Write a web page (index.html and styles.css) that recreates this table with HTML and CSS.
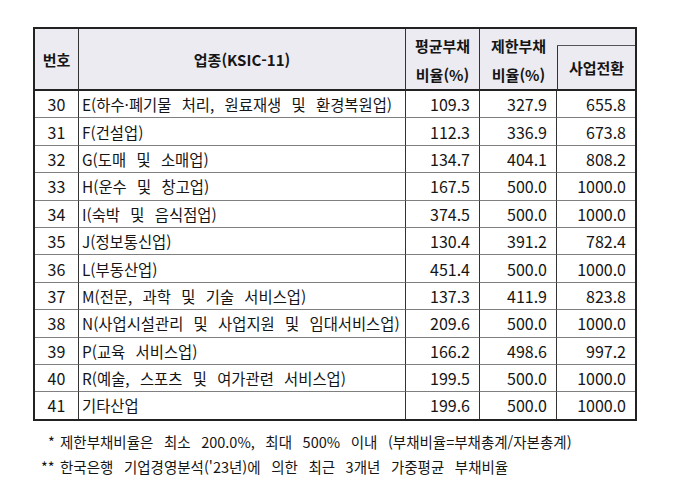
FILE: index.html
```html
<!DOCTYPE html>
<html lang="ko">
<head>
<meta charset="utf-8">
<link rel="stylesheet" href="styles.css">
</head>
<body>
<div class="page">
  <table class="debt">
    <colgroup>
      <col class="c-no"><col class="c-name"><col class="c-avg"><col class="c-lim"><col class="c-conv">
    </colgroup>
    <thead>
      <tr class="h1">
        <th rowspan="2" class="b-r">번호</th>
        <th rowspan="2" class="b-r">업종(KSIC-11)</th>
        <th rowspan="2" class="b-r two">평균부채<br>비율(%)</th>
        <th rowspan="2" class="two lim">제한부채<br>비율(%)</th>
        <th class="blank"></th>
      </tr>
      <tr class="h2">
        <th class="conv">사업전환</th>
      </tr>
    </thead>
    <tbody>
      <tr><td class="no">30</td><td class="name">E(하수·폐기물 처리, 원료재생 및 환경복원업)</td><td class="num">109.3</td><td class="num">327.9</td><td class="num last">655.8</td></tr>
      <tr><td class="no">31</td><td class="name">F(건설업)</td><td class="num">112.3</td><td class="num">336.9</td><td class="num last">673.8</td></tr>
      <tr><td class="no">32</td><td class="name">G(도매 및 소매업)</td><td class="num">134.7</td><td class="num">404.1</td><td class="num last">808.2</td></tr>
      <tr><td class="no">33</td><td class="name">H(운수 및 창고업)</td><td class="num">167.5</td><td class="num">500.0</td><td class="num last">1000.0</td></tr>
      <tr><td class="no">34</td><td class="name">I(숙박 및 음식점업)</td><td class="num">374.5</td><td class="num">500.0</td><td class="num last">1000.0</td></tr>
      <tr><td class="no">35</td><td class="name">J(정보통신업)</td><td class="num">130.4</td><td class="num">391.2</td><td class="num last">782.4</td></tr>
      <tr><td class="no">36</td><td class="name">L(부동산업)</td><td class="num">451.4</td><td class="num">500.0</td><td class="num last">1000.0</td></tr>
      <tr><td class="no">37</td><td class="name">M(전문, 과학 및 기술 서비스업)</td><td class="num">137.3</td><td class="num">411.9</td><td class="num last">823.8</td></tr>
      <tr><td class="no">38</td><td class="name">N(사업시설관리 및 사업지원 및 임대서비스업)</td><td class="num">209.6</td><td class="num">500.0</td><td class="num last">1000.0</td></tr>
      <tr><td class="no">39</td><td class="name">P(교육 서비스업)</td><td class="num">166.2</td><td class="num">498.6</td><td class="num last">997.2</td></tr>
      <tr><td class="no">40</td><td class="name">R(예술, 스포츠 및 여가관련 서비스업)</td><td class="num">199.5</td><td class="num">500.0</td><td class="num last">1000.0</td></tr>
      <tr class="end"><td class="no">41</td><td class="name">기타산업</td><td class="num">199.6</td><td class="num">500.0</td><td class="num last">1000.0</td></tr>
    </tbody>
  </table>
  <div class="notes">
    <p class="note"><span class="mark m1">*</span><span>제한부채비율은 최소 200.0%, 최대 500% 이내 (부채비율=부채총계/자본총계)</span></p>
    <p class="note"><span class="mark m2">**</span><span>한국은행 기업경영분석('23년)에 의한 최근 3개년 가중평균 부채비율</span></p>
  </div>
</div>
</body>
</html>
```

FILE: styles.css
```css
html, body {
  margin: 0;
  padding: 0;
  background: #ffffff;
}

body {
  font-family: "Noto Sans CJK KR", "Noto Sans", sans-serif;
  color: #151515;
}

.page {
  padding: 27px 0 0 33px;
}

.debt {
  border-collapse: separate;
  border-spacing: 0;
  border: 2px solid #222;
  width: 602px;
  table-layout: fixed;
  font-size: 16px;
}

.c-no { width: 44px; }
.c-name { width: 327px; }
.c-avg { width: 74px; }
.c-lim { width: 77px; }
.c-conv { width: 78px; }

thead th {
  background: #ecebf1;
  font-weight: 700;
  font-size: 15px;
  padding: 0;
  border-bottom: 2px solid #222;
  line-height: 29px;
  text-align: center;
}

.h1 { height: 16px; }
.h2 { height: 45px; }

th.b-r { border-right: 1px solid #333; }
th.two { line-height: 29px; padding-top: 2px; }

th.blank {
  border-bottom: 1px solid #555;
  height: 16px;
}

th.conv {
  border-left: 1px solid #333;
}

tbody td {
  height: 26.4px;
  padding: 0;
  border-bottom: 1px solid #808080;
  border-right: 1px solid #333;
  line-height: 20px;
  white-space: nowrap;
  overflow: hidden;
}

tbody td.last { border-right: none; }
tbody tr.end td { border-bottom: none; }

td.no { text-align: center; }
td.name { padding-left: 3px; font-size: 15.4px; word-spacing: 6px; }
td.num { text-align: right; padding-right: 9px; }

.notes {
  padding-top: 8px;
  font-size: 14.5px;
}

.note {
  margin: 0;
  height: 25px;
  display: flex;
  align-items: center;
  word-spacing: 6.5px;
}

.mark {
  text-align: left;
}

.mark.m1 {
  margin-left: 15px;
  width: 12px;
}

.mark.m2 {
  margin-left: 8px;
  width: 19px;
}
```
